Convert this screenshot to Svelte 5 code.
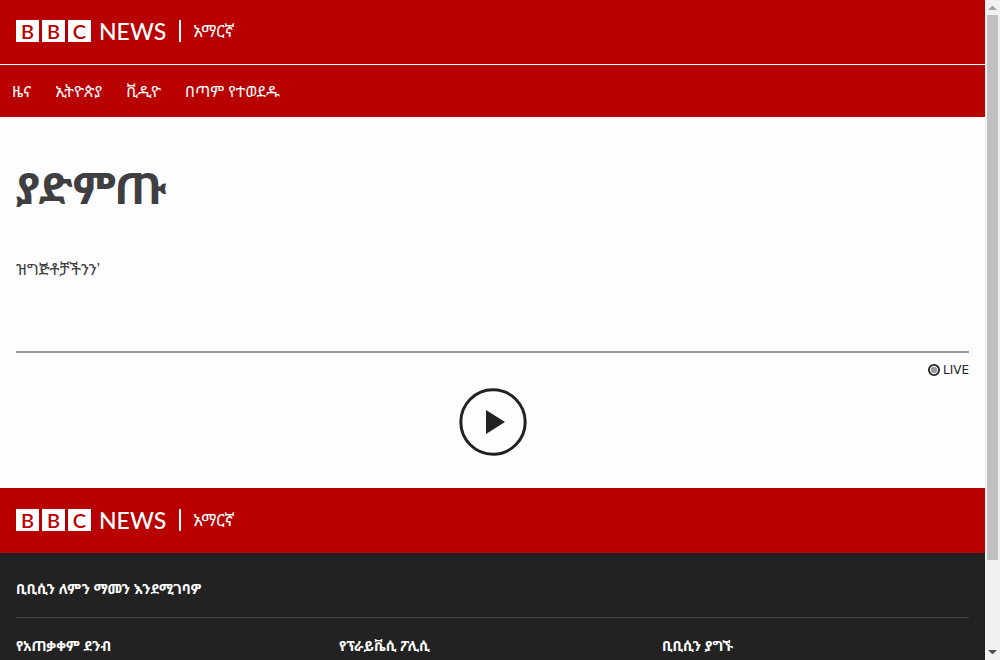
<script>
  const nav = ['ዜና', 'ኢትዮጵያ', 'ቪዲዮ', 'በጣም የተወደዱ'];
  const links = ['የአጠቃቀም ደንብ', 'የፕራይቬሲ ፖሊሲ', 'ቢቢሲን ያግኙ'];
</script>

{#snippet brand()}
  <a class="brand" href="#home" aria-label="BBC News አማርኛ">
    <span class="blocks"><span>B</span><span>B</span><span>C</span></span>
    <span class="news">NEWS</span>
    <span class="service">አማርኛ</span>
  </a>
{/snippet}

<div class="window">
  <div class="page">
    <header>
      <div class="banner">{@render brand()}</div>
      <nav>
        {#each nav as item}
          <a href="#section">{item}</a>
        {/each}
      </nav>
    </header>

    <main>
      <h1>ያድምጡ</h1>
      <p>ዝግጅቶቻችንን’</p>
      <section class="player">
        <div class="live">
          <svg width="12" height="12" viewBox="0 0 12 12" aria-hidden="true">
            <circle cx="6" cy="6" r="5.1" fill="none" stroke="#222" stroke-width="1.8" />
            <circle cx="6" cy="6" r="3.2" fill="#999" />
          </svg>
          <span>LIVE</span>
        </div>
        <button aria-label="Play">
          <svg width="68" height="68" viewBox="0 0 68 68" aria-hidden="true">
            <circle cx="34" cy="34" r="32.2" fill="none" stroke="#222" stroke-width="3" />
            <path d="M27 22v24l19-12z" fill="#222" />
          </svg>
        </button>
      </section>
    </main>

    <footer>
      <div class="banner">{@render brand()}</div>
      <div class="foot">
        <a class="trust" href="#trust">ቢቢሲን ለምን ማመን እንደሚገባዎ</a>
        <div class="links">
          {#each links as item}
            <a href="#link">{item}</a>
          {/each}
        </div>
      </div>
    </footer>
  </div>
  <div class="scrollbar" aria-hidden="true">
    <svg width="15" height="15" viewBox="0 0 15 15"><path d="M3 10l4-4h1l4 4z" fill="#a3a3a3" /></svg>
    <div class="track"><div class="thumb"></div></div>
    <svg width="15" height="15" viewBox="0 0 15 15"><path d="M3 5h9l-4 4h-1z" fill="#505050" /></svg>
  </div>
</div>

<style>
  :global(body) {
    background: #fdfdfd;
  }
  .window {
    display: grid;
    grid-template-columns: minmax(0, 1fr) 15px;
    height: 100vh;
    overflow: hidden;
  }
  .page {
    display: flex;
    flex-direction: column;
    min-height: 0;
    font-family: 'Noto Sans Ethiopic', 'Noto Sans', sans-serif;
    color: #3f3f42;
  }
  footer {
    display: flex;
    flex: 1;
    flex-direction: column;
  }
  a {
    color: inherit;
    text-decoration: none;
  }
  .banner {
    display: flex;
    align-items: center;
    padding: 20px 16px 22px;
    background: #b80000;
    color: #fff;
  }
  footer .banner {
    padding-top: 21px;
  }
  .brand {
    display: flex;
    align-items: center;
    height: 22px;
    line-height: 22px;
  }
  .blocks {
    display: flex;
    gap: 3px;
    font: 600 20px/22px Lato, sans-serif;
    color: #b80000;
  }
  .blocks span {
    width: 23px;
    height: 22px;
    background: #fff;
    text-align: center;
  }
  .news {
    margin-left: 8px;
    font: 500 23px/22px Lato, sans-serif;
  }
  .service {
    margin-left: 13px;
    padding-left: 12px;
    border-left: 2px solid #fff;
    font-size: 17px;
  }
  nav {
    display: flex;
    gap: 24px;
    padding: 16px 12px;
    border-top: 1px solid #fff;
    background: #b80000;
    color: #fff;
    font-size: 16px;
    line-height: 20px;
  }
  main {
    padding: 0 16px 32px;
  }
  h1 {
    margin: 0;
    padding: 42px 0 34px;
    font-size: 44px;
    line-height: 56px;
    font-weight: 700;
  }
  p {
    margin: 0;
    padding: 9px 0 69px;
    font-family: 'Liberation Sans', 'Noto Sans Ethiopic', sans-serif;
    font-size: 16px;
    line-height: 24px;
  }
  .player {
    display: flex;
    flex-direction: column;
    border-top: 2px solid #999;
    color: #222;
  }
  .live {
    display: flex;
    justify-content: flex-end;
    align-items: center;
    gap: 3px;
    padding-top: 9px;
    font: 400 12px/16px 'DejaVu Sans', sans-serif;
  }
  button {
    align-self: center;
    display: flex;
    margin-top: 10px;
    padding: 0;
    border: 0;
    background: none;
  }
  .foot {
    flex: 1;
    padding: 24px 16px 0;
    background: #222;
    color: #fff;
    font-size: 14px;
    line-height: 24px;
    font-weight: 700;
  }
  .trust {
    display: block;
    padding-bottom: 16px;
    border-bottom: 1px solid #404040;
  }
  .links {
    display: grid;
    grid-template-columns: repeat(3, 1fr);
    gap: 16px;
    padding-top: 16px;
  }
  .scrollbar {
    display: flex;
    flex-direction: column;
    background: #f1f1f1;
  }
  .track {
    flex: 1;
    padding: 0 2px;
  }
  .thumb {
    height: 86.5%;
    background: #c1c1c1;
  }
</style>
